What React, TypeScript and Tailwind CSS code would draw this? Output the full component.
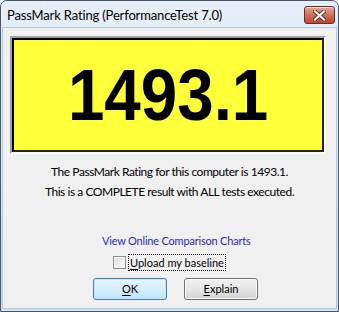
import React from "react";

const ui = { fontFamily: 'Lato, "Noto Sans", sans-serif' };

function CloseButton() {
  return (
    <div className="mt-[5px] mr-[3px] flex h-[18px] w-[31px] items-center justify-center rounded-[3px] border border-[#6d2a22] bg-gradient-to-b from-[#e9a99a] via-[#d0705c] to-[#c0402a] shadow-[inset_0_1px_0_rgba(255,255,255,0.6)]">
      <svg width="13" height="11" viewBox="0 0 13 11">
        <path d="M2 1.5 L11 9.5 M11 1.5 L2 9.5" stroke="#5a2a22" strokeWidth="4" strokeLinecap="square" />
        <path d="M2 1.5 L11 9.5 M11 1.5 L2 9.5" stroke="#ffffff" strokeWidth="2.2" strokeLinecap="square" />
      </svg>
    </div>
  );
}

function Button({ label, mnemonic, primary }: { label: string; mnemonic: string; primary?: boolean }) {
  const rest = label.slice(1);
  return (
    <button
      className={
        "flex h-[22px] w-[74px] items-center justify-center rounded-[3px] border text-[11px] text-black " +
        (primary
          ? "border-[#3c7fb1] bg-gradient-to-b from-[#eaf6fd] to-[#bee6fd] shadow-[inset_0_0_0_1px_#c8e8fa]"
          : "border-[#707070] bg-gradient-to-b from-[#f2f2f2] via-[#e6e6e6] to-[#d4d4d4] shadow-[inset_0_0_0_1px_#fcfcfc]")
      }
      style={ui}
    >
      <span className="underline underline-offset-2">{mnemonic}</span>
      {rest}
    </button>
  );
}

export default function App() {
  return (
    <div className="h-[312px] w-[339px] overflow-hidden bg-white">
      <div className="flex h-[312px] w-[339px] flex-col rounded-t-[7px] border border-[#4a5868] bg-gradient-to-b from-[#e6eef7] to-[#d3e0ee]">
        <div className="flex h-[26px] items-start justify-between">
          <div className="pl-[6px] pt-[5px] text-[13px] leading-[18px] tracking-[-0.15px] text-black" style={ui}>
            PassMark Rating (PerformanceTest 7.0)
          </div>
          <CloseButton />
        </div>

        <div className="mx-[1px] mb-[2px] flex flex-1 flex-col border border-[#a9cbe3] bg-[#f0f0f0]">
          <div className="ml-[7px] mt-[8px] h-[118px] w-[316px] border-2 border-b-white border-l-[#a0a0a0] border-r-white border-t-[#a0a0a0]">
            <div className="flex h-full w-full items-center justify-center border-2 border-b-[#222] border-l-black border-r-[#222] border-t-black bg-[#ffff3a]">
              <span
                className="inline-block scale-x-[0.91] text-[72px] font-bold leading-none text-black"
                style={{ fontFamily: '"Liberation Sans", Arial, sans-serif' }}
              >
                1493.1
              </span>
            </div>
          </div>

          <div className="mt-[8px] text-center text-[12px] leading-[20px] tracking-[-0.45px] text-black" style={ui}>
            <div>The PassMark Rating for this computer is 1493.1.</div>
            <div>This is a COMPLETE result with ALL tests executed.</div>
          </div>

          <div className="mt-[29px] flex h-[20px] items-center pl-[99px] text-[11px] tracking-[-0.2px] text-[#2a2ab8]" style={ui}>
            View Online Comparison Charts
          </div>

          <div className="mt-[3px] flex h-[17px] items-center pl-[110px] text-[11px] text-black" style={ui}>
            <div className="h-[13px] w-[13px] border border-[#8f8f8f] bg-gradient-to-br from-[#dcdcdc] to-[#fbfbfb] shadow-[inset_0_0_0_1px_#f4f4f4]" />
            <div className="ml-[2px] border border-dotted border-black px-[1px] leading-[15px]">
              <span className="underline underline-offset-2">U</span>pload my baseline
            </div>
          </div>

          <div className="mt-[7px] flex gap-[17px] pl-[90px]">
            <Button label="OK" mnemonic="O" primary />
            <Button label="Explain" mnemonic="E" />
          </div>
        </div>
      </div>
    </div>
  );
}
